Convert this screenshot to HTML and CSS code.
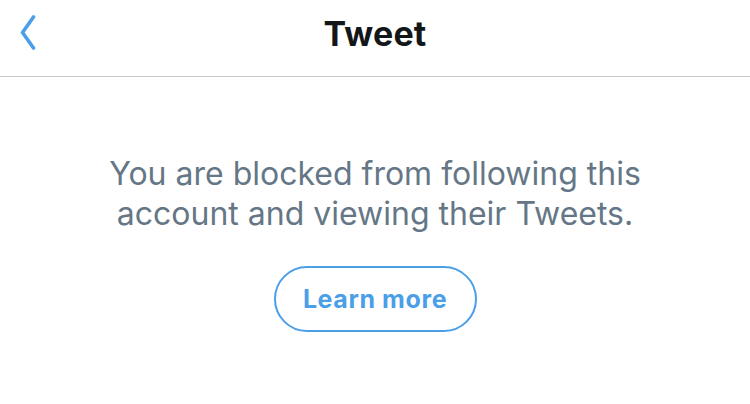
FILE: index.html
```html
<!DOCTYPE html>
<html>
<head>
<meta charset="utf-8">
<link rel="stylesheet" href="styles.css">
</head>
<body>
<header class="nav">
  <button class="back" aria-label="Back">
    <svg width="16" height="36" viewBox="0 0 16 36"><path d="M13.5 2 L2.5 17.5 L13.5 33" fill="none" stroke="#4a9fe8" stroke-width="3.6" stroke-linecap="round" stroke-linejoin="round"/></svg>
  </button>
  <h1 class="title">Tweet</h1>
</header>
<main class="content">
  <p class="message">You are blocked from following this account and viewing their Tweets.</p>
  <a class="learn" href="#">Learn more</a>
</main>
</body>
</html>
```
FILE: styles.css
```css
html, body { margin: 0; padding: 0; background: #fff; }
body { width: 750px; height: 404px; overflow: hidden; font-family: Inter, "Liberation Sans", Arial, sans-serif; }
.nav {
  position: relative;
  height: 76px;
  border-bottom: 1px solid #c8c8cc;
  display: flex;
  align-items: center;
  justify-content: center;
  padding-bottom: 10px;
  box-sizing: border-box;
  height: 77px;
}
.back {
  position: absolute;
  left: 20px;
  top: 15px;
  border: 0;
  background: none;
  padding: 0;
  width: 18px;
  height: 36px;
}
.back svg { display: block; }
.title {
  margin: 0;
  font-size: 34px;
  font-weight: bold;
  color: #14171a;
  letter-spacing: 0.2px;
}
.content {
  display: flex;
  flex-direction: column;
  align-items: center;
  padding-top: 77px;
}
.message {
  margin: 0;
  width: 580px;
  text-align: center;
  font-size: 32px;
  line-height: 40px;
  color: #657786;
}
.learn {
  margin-top: 32px;
  width: 199px;
  height: 62px;
  border: 2px solid #4a9fe8;
  border-radius: 33px;
  display: flex;
  align-items: center;
  justify-content: center;
  color: #4a9fe8;
  font-size: 25px;
  font-weight: bold;
  letter-spacing: 0.6px;
  text-decoration: none;
}
```
